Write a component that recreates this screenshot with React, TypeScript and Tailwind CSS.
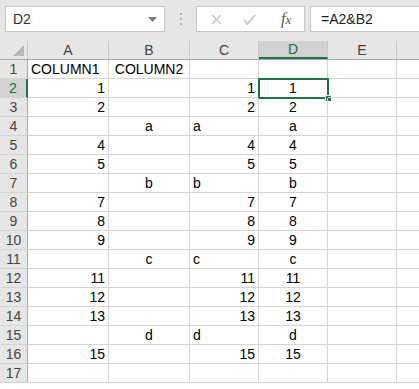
import React from "react";

type Align = "l" | "r" | "c";
type Cell = { v: string; a: Align } | null;

const COLS = [
  { name: "A", w: "w-[81px]" },
  { name: "B", w: "w-[81px]" },
  { name: "C", w: "w-[69px]" },
  { name: "D", w: "w-[69px]" },
  { name: "E", w: "w-[69px]" },
];

const n = (v: string): Cell => ({ v, a: "r" });
const c = (v: string): Cell => ({ v, a: "c" });
const l = (v: string): Cell => ({ v, a: "l" });

const ROWS: Cell[][] = [
  [l("COLUMN1"), c("COLUMN2"), null, null, null],
  [n("1"), null, n("1"), c("1"), null],
  [n("2"), null, n("2"), c("2"), null],
  [null, c("a"), l("a"), c("a"), null],
  [n("4"), null, n("4"), c("4"), null],
  [n("5"), null, n("5"), c("5"), null],
  [null, c("b"), l("b"), c("b"), null],
  [n("7"), null, n("7"), c("7"), null],
  [n("8"), null, n("8"), c("8"), null],
  [n("9"), null, n("9"), c("9"), null],
  [null, c("c"), l("c"), c("c"), null],
  [n("11"), null, n("11"), c("11"), null],
  [n("12"), null, n("12"), c("12"), null],
  [n("13"), null, n("13"), c("13"), null],
  [null, c("d"), l("d"), c("d"), null],
  [n("15"), null, n("15"), c("15"), null],
  [null, null, null, null, null],
];

const alignCls: Record<Align, string> = {
  l: "justify-start pl-[3px]",
  r: "justify-end pr-[3px]",
  c: "justify-center",
};

function TopBar() {
  return (
    <div className="flex items-center h-[41px] bg-[#e6e6e6] px-[5px] pb-[4px] pt-[1px]">
      <div className="relative flex items-center w-[160px] h-[26px] bg-white border border-[#c6c6c6] pl-[7px] text-[14px] text-[#333]">
        D2
        <svg className="absolute left-[142px] top-[10px]" width="9" height="5" viewBox="0 0 9 5">
          <path d="M0 0 H9 L4.5 5 Z" fill="#7a7a7a" />
        </svg>
      </div>
      <div className="flex flex-col items-center justify-center gap-[3px] w-[31px]">
        <span className="w-[2px] h-[2px] bg-[#b0b0b0]" />
        <span className="w-[2px] h-[2px] bg-[#b0b0b0]" />
        <span className="w-[2px] h-[2px] bg-[#b0b0b0]" />
      </div>
      <div className="flex items-center w-[109px] h-[26px] bg-white border border-[#c6c6c6]">
        <svg className="ml-[14px]" width="11" height="11" viewBox="0 0 11 11">
          <path d="M1 1 L10 10 M10 1 L1 10" stroke="#c4c4c4" strokeWidth="1.3" />
        </svg>
        <svg className="ml-[21px]" width="13" height="11" viewBox="0 0 13 11">
          <path d="M1 6 L4.5 10 L12 1" stroke="#c4c4c4" strokeWidth="1.6" fill="none" />
        </svg>
        <span className="ml-[25px] font-['Liberation_Serif',serif] italic text-[16px] text-[#555] leading-none">
          f<span className="text-[13px]">x</span>
        </span>
      </div>
      <div className="flex items-center flex-1 h-[26px] ml-[5px] -mr-[5px] bg-white border border-[#c6c6c6] border-r-0 pl-[10px] text-[14px] text-[#222]">
        =A2&amp;B2
      </div>
    </div>
  );
}

function HeaderRow() {
  return (
    <div className="flex h-[19px] bg-[#e6e6e6] border-b border-[#ababab]">
      <div className="relative w-[28px] shrink-0 border-r border-[#c8c8c8]">
        <svg className="absolute right-[3px] bottom-[3px]" width="11" height="11" viewBox="0 0 11 11">
          <path d="M11 0 V11 H0 Z" fill="#b8b8b8" />
        </svg>
      </div>
      {COLS.map((col) => (
        <div
          key={col.name}
          className={`${col.w} shrink-0 flex items-center justify-center border-r border-[#c8c8c8] text-[14px] ${
            col.name === "D"
              ? "bg-[#d2d2d2] text-[#216a3f] border-b-2 border-b-[#217346]"
              : "text-[#444]"
          }`}
        >
          {col.name}
        </div>
      ))}
      <div className="flex-1" />
    </div>
  );
}

function Row({ idx, cells }: { idx: number; cells: Cell[] }) {
  const active = idx === 2;
  return (
    <div className="flex h-[19px]">
      <div
        className={`w-[28px] shrink-0 flex items-center justify-center border-b border-[#d4d4d4] text-[14px] ${
          active
            ? "bg-[#d2d2d2] text-[#216a3f] border-r-2 border-r-[#217346]"
            : "bg-[#e6e6e6] text-[#444] border-r border-r-[#ababab]"
        }`}
      >
        {idx}
      </div>
      {cells.map((cell, i) => (
        <div
          key={i}
          className={`${COLS[i].w} shrink-0 relative flex items-center border-r border-b border-[#d4d4d4] text-[14px] text-black whitespace-nowrap ${
            cell ? alignCls[cell.a] : ""
          }`}
        >
          {cell?.v}
          {active && i === 3 && (
            <>
              <div className="absolute -left-[1px] -top-[1px] -right-[2px] -bottom-[2px] border-2 border-[#217346]" />
              <div className="absolute -right-[5px] -bottom-[5px] w-[7px] h-[7px] bg-[#217346] border border-white" />
            </>
          )}
        </div>
      ))}
      <div className="flex-1 border-b border-[#d4d4d4]" />
    </div>
  );
}

export default function App() {
  return (
    <div className="w-[419px] h-[389px] overflow-hidden bg-white font-['Liberation_Sans',Arial,sans-serif] leading-none">
      <TopBar />
      <HeaderRow />
      {ROWS.map((cells, i) => (
        <Row key={i} idx={i + 1} cells={cells} />
      ))}
    </div>
  );
}
